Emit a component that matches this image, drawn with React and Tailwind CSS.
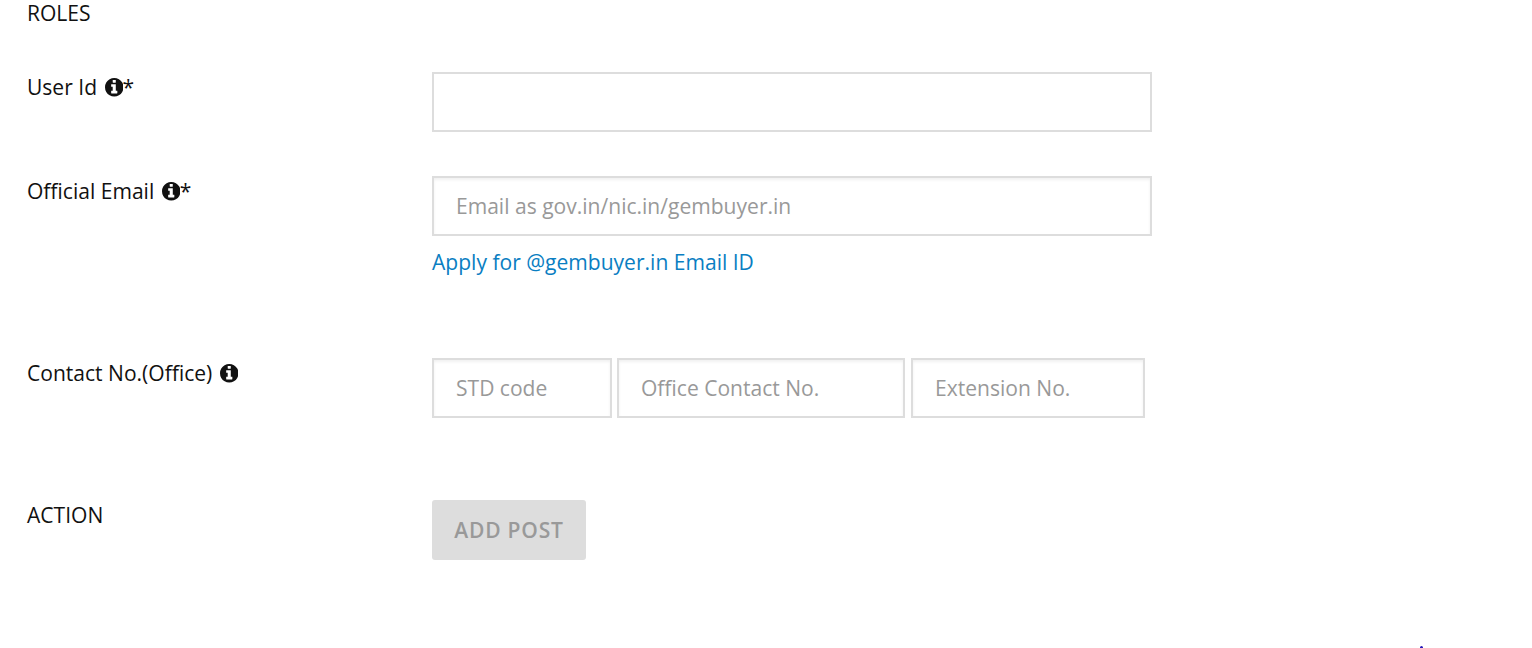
const field =
  "block h-[60px] border-2 border-[#dddddd] bg-white px-[22px] pb-[1px] text-[21.06px] text-black placeholder:text-[#999999] placeholder:opacity-100 outline-none";
const inset = "shadow-[inset_0_2px_3px_rgba(0,0,0,0.06)]";

function InfoIcon() {
  return (
    <svg viewBox="0 128 1536 1536" fill="currentColor" className="mt-[1px] ml-[7.5px] h-[18.5px] w-[18.5px]">
      <path d="M1024 1376v-160q0-14-9-23t-23-9h-96v-512q0-14-9-23t-23-9h-320q-14 0-23 9t-9 23v160q0 14 9 23t23 9h96v320h-96q-14 0-23 9t-9 23v160q0 14 9 23t23 9h448q14 0 23-9t9-23zm-128-896v-160q0-14-9-23t-23-9h-192q-14 0-23 9t-9 23v160q0 14 9 23t23 9h192q14 0 23-9t9-23zm640 416q0 209-103 385.5t-279.5 279.5-385.5 103-385.5-103-279.5-279.5-103-385.5 103-385.5 279.5-279.5 385.5-103 385.5 103 279.5 279.5 103 385.5z" />
    </svg>
  );
}

function Label({ text, info, required }) {
  return (
    <div className="flex h-[30px] w-[405px] shrink-0 items-center whitespace-pre">
      <span>{text}</span>
      {info && <InfoIcon />}
      {required && <span className="-ml-[0.5px]">*</span>}
    </div>
  );
}

export default function App() {
  return (
    <main className="relative h-[648px] w-full overflow-hidden bg-white pl-[27px] font-['Open_Sans',sans-serif] text-[21.06px] leading-[30px] text-[#111111]">
      <div className="-mt-[2px] flex h-[74px]">
        <Label text="ROLES" />
      </div>
      <div className="flex h-[104px]">
        <Label text="User Id" info required />
        <input className={`${field} w-[720px]`} />
      </div>
      <div className="flex h-[182px]">
        <Label text="Official Email" info required />
        <div>
          <input className={`${field} ${inset} w-[720px]`} placeholder="Email as gov.in/nic.in/gembuyer.in" />
          <a className="mt-[11px] block text-[#0a7ec2]">Apply for @gembuyer.in Email ID</a>
        </div>
      </div>
      <div className="flex h-[142px]">
        <Label text="Contact No.(Office)" info />
        <input className={`${field} ${inset} w-[180px]`} placeholder="STD code" />
        <input className={`${field} ${inset} ml-[5px] w-[288px]`} placeholder="Office Contact No." />
        <input className={`${field} ${inset} ml-[6px] w-[234px]`} placeholder="Extension No." />
      </div>
      <div className="flex">
        <Label text="ACTION" />
        <button className="h-[60px] w-[154px] rounded-[3px] bg-[#dddddd] font-semibold tracking-[0.8px] text-[#999999]">ADD POST</button>
      </div>
      <span className="absolute bottom-0 left-[1420px] h-[2px] w-[3px] rounded-t-full bg-[#2418b8]" />
    </main>
  );
}
